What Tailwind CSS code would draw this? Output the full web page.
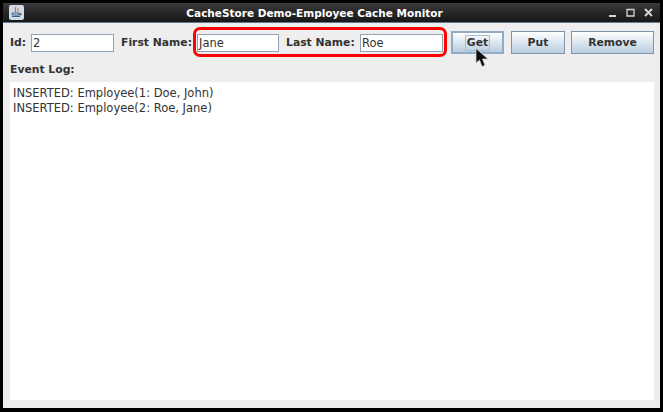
<!DOCTYPE html>
<html>
<head>
<meta charset="utf-8">
<script src="https://cdn.jsdelivr.net/npm/@tailwindcss/browser@4"></script>
</head>
<body class="bg-black">
<div class="relative w-[663px] h-[412px] bg-black pt-[3px] pl-[3px] pr-[3px] pb-[4px] flex flex-col overflow-hidden font-['DejaVu_Sans',sans-serif]">
  <!-- title bar -->
  <div class="h-[20px] shrink-0 bg-gradient-to-b from-[#3a3a3a] to-[#171717] border-b border-[#5f7b96] flex items-center relative pl-[6px] pr-[7px]">
    <div class="w-[15px] h-[15px] bg-[#cfdbe6] rounded-[2px] flex items-center justify-center">
      <svg width="13" height="13" viewBox="0 0 13 13"><path d="M6 1C4 3 7 4 5 6" stroke="#d9702a" stroke-width="1.2" fill="none"/><path d="M8 2C7 4 9 4 8 6" stroke="#d9702a" stroke-width="1" fill="none"/><path d="M2 7h7v2H2zM2 10.500h8" stroke="#3f6486" fill="none"/><path d="M9 7.500h2v1.500H9" stroke="#3f6486" fill="none"/></svg>
    </div>
    <div class="absolute left-0 w-[623px] text-center text-white font-bold text-[10.5px] leading-[20px]">CacheStore Demo-Employee Cache Monitor</div>
    <div class="ml-auto flex items-center gap-[9px] relative">
      <svg width="9" height="9" viewBox="0 0 9 9"><path d="M1 8h7" stroke="#d4d4d4" stroke-width="2"/></svg>
      <svg width="9" height="9" viewBox="0 0 9 9"><path d="M1 1.500h7v6.500H1z" stroke="#d4d4d4" stroke-width="1.300" fill="none"/></svg>
      <svg width="9" height="9" viewBox="0 0 9 9"><path d="M1 1l7 7M8 1l-7 7" stroke="#d4d4d4" stroke-width="2"/></svg>
    </div>
  </div>
  <!-- body -->
  <div class="flex-1 bg-[#eeeeee] pl-[7px] pr-[6px] flex flex-col text-[#333333]">
    <div class="flex items-center h-[23px] mt-[8px] text-[10.8px] font-bold">
      <span class="w-[21px] pt-[2px]">Id:</span>
      <div class="w-[83px] h-[18px] bg-white border border-[#8fa3b5] text-[11.5px] font-normal leading-[17px] pl-[1px]">2</div>
      <span class="ml-[7px] w-[76px] pt-[2px]">First Name:</span>
      <div class="w-[82px] h-[18px] bg-white border border-[#8fa3b5] text-[11.5px] font-normal leading-[17px] pl-[1px]">Jane</div>
      <span class="ml-[7px] w-[74px] pt-[2px]">Last Name:</span>
      <div class="w-[83px] h-[18px] bg-white border border-[#8fa3b5] text-[11.5px] font-normal leading-[17px] pl-[1px]">Roe</div>
      <div class="ml-[8px] w-[53px] h-[23px] border-2 border-[#90abc6] bg-gradient-to-b from-white to-[#b9cde0] flex items-center justify-center">
        <span class="border border-[#a9bfd3] px-[1px] leading-[14px]">Get</span>
      </div>
      <div class="ml-[7px] w-[54px] h-[23px] border border-[#7f95a9] bg-gradient-to-b from-white to-[#b9cde0] flex items-center justify-center pt-[1px]">Put</div>
      <div class="ml-[6px] w-[83px] h-[23px] border border-[#7f95a9] bg-gradient-to-b from-white to-[#b9cde0] flex items-center justify-center pt-[1px]">Remove</div>
    </div>
    <div class="text-[10.8px] font-bold h-[14px] leading-[14px] mt-[9px]">Event Log:</div>
    <div class="mt-[5px] h-[318px] bg-white pl-[3px] pt-[4px] text-[11.5px] leading-[15px] text-[#333333]">
      <div>INSERTED: Employee(1: Doe, John)</div>
      <div>INSERTED: Employee(2: Roe, Jane)</div>
    </div>
  </div>
  <!-- callout -->
  <div class="absolute left-[193px] top-[27px] w-[254px] h-[30px] border-[3px] border-[#ff0000] rounded-[7px]"></div>
  <!-- cursor -->
  <svg class="absolute left-[475px] top-[48px]" width="14" height="20" viewBox="0 0 14 20"><path d="M1 0.500v14.500l3.500-3 2.500 6.500 3-1.200-2.500-6.300h5.500z" fill="#0c0c0c" stroke="#cfcfcf" stroke-width="0.800"/></svg>
</div>
</body>
</html>
